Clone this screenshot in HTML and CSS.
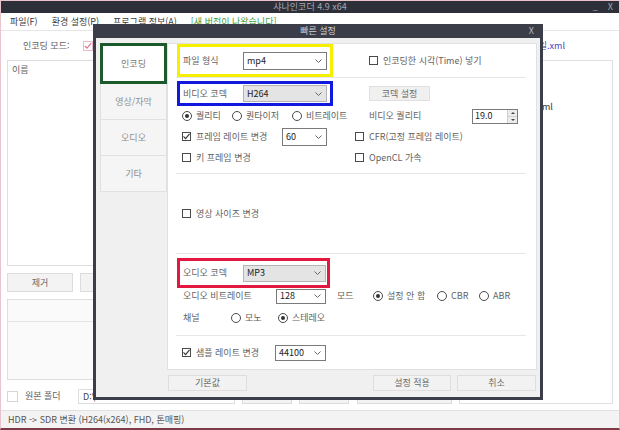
FILE: index.html
```html
<!DOCTYPE html>
<html lang="ko">
<head>
  <meta charset="UTF-8">
  <title>샤나인코더 4.9 x64</title>
  <link rel="stylesheet" href="styles.css">
</head>
<body>
  <div class="window">
    <div class="titlebar">
      <span></span>
      <span class="app-title">샤나인코더 4.9 x64</span>
      <span class="win-btns"><span>_</span><span>X</span></span>
    </div>
    <div class="menubar">
      <span>파일(F)</span>
      <span>환경 설정(P)</span>
      <span>프로그램 정보(A)</span>
      <span class="new-ver">[새 버전이 나왔습니다]</span>
    </div>
    <div class="toolbar">
      <span class="mode-label">인코딩 모드:</span>
      <span class="cb pink"><svg width="8" height="8" viewBox="0 0 8 8"><polyline points="0.8,4 3,6.2 7.2,1.2" fill="none" stroke="#de7795" stroke-width="1.2"/></svg></span>
      <span class="preset-link">기본 설정 파일.xml</span>
    </div>
    <div class="main">
      <div class="left-col">
        <div class="file-list">
          <div class="list-head">이름</div>
        </div>
        <div class="list-btns">
          <button>제거</button>
          <button></button>
        </div>
        <div class="job-panel">
          <div class="job-head"></div>
        </div>
        <div class="folder-row">
          <span class="cb big"></span>
          <span class="folder-label">원본 폴더</span>
          <span class="folder-input">D:\</span>
          <button class="btn-s"></button>
          <button class="btn-s"></button>
          <button class="btn-l"></button>
        </div>
      </div>
      <div class="preset-box">
        <div class="preset-item">사용자 설정.xml</div>
      </div>
    </div>
    <div class="statusbar">HDR -&gt; SDR 변환 (H264(x264), FHD, 톤매핑)</div>

    <div class="dialog">
      <div class="dlg-title">
        <span></span>
        <span>빠른 설정</span>
        <span class="dlg-close">X</span>
      </div>
      <div class="dlg-body">
        <div class="dlg-main">
          <div class="tabs">
            <div class="tab active">인코딩</div>
            <div class="tab">영상/자막</div>
            <div class="tab">오디오</div>
            <div class="tab">기타</div>
          </div>
          <div class="panel">
            <div class="row row-mark r-format">
              <div class="mark mark-yellow">
                <span class="lbl">파일 형식</span>
                <span class="sel w84">mp4<svg width="7" height="4" viewBox="0 0 7 4"><polyline points="0.5,0.5 3.5,3.5 6.5,0.5" fill="none" stroke="#666"/></svg></span>
              </div>
              <span class="opt gap-r"><span class="cb"></span>인코딩한 시각(Time) 넣기</span>
            </div>
            <div class="sep"></div>
            <div class="row row-mark r-codec">
              <div class="mark mark-blue">
                <span class="lbl">비디오 코덱</span>
                <span class="sel gray w84">H264<svg width="7" height="4" viewBox="0 0 7 4"><polyline points="0.5,0.5 3.5,3.5 6.5,0.5" fill="none" stroke="#666"/></svg></span>
              </div>
              <button class="codec-btn gap-r">코덱 설정</button>
            </div>
            <div class="row r-radio">
              <span class="opt w50"><span class="rd on"></span>퀄리티</span>
              <span class="opt w60"><span class="rd"></span>퀀타이저</span>
              <span class="opt w77"><span class="rd"></span>비트레이트</span>
              <span class="lbl w103">비디오 퀄리티</span>
              <span class="spin">19.0<span class="spin-btns"><i class="up"></i><i class="down"></i></span></span>
            </div>
            <div class="row r-line">
              <span class="opt w100"><span class="cb"><svg width="7" height="7" viewBox="0 0 7 7"><polyline points="0.5,3.4 2.6,5.6 6.5,0.8" fill="none" stroke="#333" stroke-width="1.1"/></svg></span>프레임 레이트 변경</span>
              <span class="sel w45">60<svg width="7" height="4" viewBox="0 0 7 4"><polyline points="0.5,0.5 3.5,3.5 6.5,0.5" fill="none" stroke="#666"/></svg></span>
              <span class="opt cfr"><span class="cb"></span>CFR(고정 프레임 레이트)</span>
            </div>
            <div class="row r-line">
              <span class="opt w173"><span class="cb"></span>키 프레임 변경</span>
              <span class="opt"><span class="cb"></span>OpenCL 가속</span>
            </div>
            <div class="sep sep-gap5"></div>
            <div class="row r-size">
              <span class="opt"><span class="cb"></span>영상 사이즈 변경</span>
            </div>
            <div class="sep"></div>
            <div class="row row-mark r-acodec">
              <div class="mark mark-red">
                <span class="lbl">오디오 코덱</span>
                <span class="sel gray w83">MP3<svg width="7" height="4" viewBox="0 0 7 4"><polyline points="0.5,0.5 3.5,3.5 6.5,0.5" fill="none" stroke="#666"/></svg></span>
              </div>
            </div>
            <div class="row r-abit">
              <span class="lbl w94">오디오 비트레이트</span>
              <span class="sel w50 short">128<svg width="7" height="4" viewBox="0 0 7 4"><polyline points="0.5,0.5 3.5,3.5 6.5,0.5" fill="none" stroke="#666"/></svg></span>
              <span class="lbl mode">모드</span>
              <span class="opt w64"><span class="rd on"></span>설정 안 함</span>
              <span class="opt w42"><span class="rd"></span>CBR</span>
              <span class="opt"><span class="rd"></span>ABR</span>
            </div>
            <div class="row r-chan">
              <span class="lbl w49">채널</span>
              <span class="opt w47"><span class="rd"></span>모노</span>
              <span class="opt"><span class="rd on"></span>스테레오</span>
            </div>
            <div class="sep sep-gap7"></div>
            <div class="row r-sample">
              <span class="opt w93"><span class="cb"><svg width="7" height="7" viewBox="0 0 7 7"><polyline points="0.5,3.4 2.6,5.6 6.5,0.8" fill="none" stroke="#333" stroke-width="1.1"/></svg></span>샘플 레이트 변경</span>
              <span class="sel w51">44100<svg width="7" height="4" viewBox="0 0 7 4"><polyline points="0.5,0.5 3.5,3.5 6.5,0.5" fill="none" stroke="#666"/></svg></span>
            </div>
          </div>
        </div>
        <div class="dlg-btns">
          <button>기본값</button>
          <button class="apply">설정 적용</button>
          <button class="cancel">취소</button>
        </div>
      </div>
    </div>
  </div>
</body>
</html>
```

FILE: styles.css
```css
* {
  margin: 0;
  padding: 0;
  box-sizing: border-box;
}
body {
  font-family: "Noto Sans CJK KR", "Noto Sans", sans-serif;
  font-size: 9px;
  line-height: 12px;
  color: #626262;
  background-color: #ffffff;
}
button {
  font: inherit;
  color: #6a6a6a;
  background-color: #f3f3f3;
  border: 1px solid #dcdcdc;
}

/* main window */
.window {
  position: relative;
  width: 620px;
  height: 430px;
  border: 1px solid #ebc3cd;
  border-bottom: 2px solid #7e3a46;
  background-color: #ffffff;
  display: flex;
  flex-direction: column;
}
.titlebar {
  height: 12px;
  flex: none;
  background-color: #2d2f39;
  color: #a3a5af;
  display: grid;
  grid-template-columns: 1fr auto 1fr;
  align-items: center;
}
.win-btns {
  justify-self: end;
  display: flex;
  gap: 10px;
  padding-right: 6px;
}
.menubar {
  height: 18px;
  flex: none;
  border-bottom: 1px solid #e6e6e6;
  display: flex;
  align-items: center;
  gap: 14px;
  padding-left: 9px;
  color: #3a3a3a;
}
.new-ver {
  color: #3d9c3d;
}
.toolbar {
  height: 29px;
  flex: none;
  display: flex;
  align-items: center;
  padding-left: 22px;
  padding-right: 54px;
}
.mode-label {
  width: 60px;
}
.preset-link {
  margin-left: auto;
  color: #4a40c8;
}
.main {
  height: 344px;
  flex: none;
  display: flex;
  gap: 4px;
  padding: 0 6px;
}
.left-col {
  width: 448px;
  display: flex;
  flex-direction: column;
}
.file-list {
  height: 206px;
  border: 1px solid #dedede;
  background-color: #ffffff;
}
.list-head {
  height: 17px;
  line-height: 17px;
  padding-left: 4px;
}
.list-btns {
  height: 19px;
  margin-top: 7px;
  display: flex;
  gap: 7px;
}
.list-btns button {
  width: 66px;
}
.job-panel {
  height: 81px;
  margin-top: 7px;
  border: 1px solid #dedede;
  background-color: #fafafa;
}
.job-head {
  height: 22px;
  border-bottom: 1px solid #e3e3e3;
}
.folder-row {
  height: 16px;
  margin-top: 8px;
  display: flex;
  align-items: center;
}
.folder-label {
  width: 53px;
  margin-left: 7px;
}
.folder-input {
  width: 157px;
  height: 15px;
  border: 1px solid #dedede;
  padding-left: 4px;
  line-height: 13px;
  color: #444444;
}
.folder-row button {
  height: 16px;
}
.btn-s {
  width: 50px;
  margin-left: 7px;
}
.btn-l {
  width: 95px;
  margin-left: 8px;
}
.preset-box {
  flex: 1;
  border: 1px solid #e0e0e0;
  background-color: #ffffff;
}
.preset-item {
  margin-top: 40px;
  padding-left: 31px;
  color: #333333;
}
.statusbar {
  height: 18px;
  flex: none;
  margin-top: 6px;
  border-top: 1px solid #e0e0e0;
  background-color: #f3f3f3;
  padding-left: 7px;
  display: flex;
  align-items: center;
  color: #555555;
}

/* check boxes, radios, combo boxes */
.cb {
  width: 9px;
  height: 9px;
  flex: none;
  border: 1px solid #4a4a4a;
  background-color: #ffffff;
  display: inline-flex;
  align-items: center;
  justify-content: center;
}
.cb.pink {
  width: 10px;
  height: 10px;
  border-color: #e8b9c7;
}
.cb.big {
  width: 11px;
  height: 11px;
  border-color: #d6d6d6;
}
.rd {
  width: 10px;
  height: 10px;
  flex: none;
  border: 1px solid #4a4a4a;
  border-radius: 50%;
  display: inline-flex;
  align-items: center;
  justify-content: center;
}
.rd.on::after {
  content: '';
  width: 4px;
  height: 4px;
  border-radius: 50%;
  background-color: #333333;
}
.opt {
  display: flex;
  align-items: center;
  gap: 4px;
  flex: none;
  white-space: nowrap;
}
.opt .cb {
  margin-right: 1px;
}
.lbl {
  flex: none;
  white-space: nowrap;
}
.sel {
  flex: none;
  height: 18px;
  display: flex;
  align-items: center;
  justify-content: space-between;
  padding: 0 4px 0 3px;
  border: 1px solid #7a7a7a;
  background-color: #ffffff;
  color: #222222;
}
.sel.gray {
  height: 17px;
  background-color: #e4e4e4;
  border-color: #b4b4b4;
}
.sel.short {
  height: 15px;
}

/* quick settings dialog */
.dialog {
  position: absolute;
  left: 92px;
  top: 23px;
  width: 450px;
  height: 376px;
  background-color: #3b3d48;
  padding: 0 3px 3px;
  display: flex;
  flex-direction: column;
}
.dlg-title {
  height: 14px;
  flex: none;
  display: grid;
  grid-template-columns: 1fr auto 1fr;
  align-items: center;
  color: #cfd0d6;
}
.dlg-close {
  justify-self: end;
  padding-right: 6px;
  color: #b9bac2;
}
.dlg-body {
  flex: 1;
  background-color: #f0f0f0;
  padding: 5px 3px 0 4px;
}
.dlg-main {
  display: flex;
}
.tabs {
  width: 67px;
  flex: none;
  display: flex;
  flex-direction: column;
}
.tab {
  height: 36px;
  display: flex;
  align-items: center;
  justify-content: center;
  background-color: #f5f5f5;
  border: 1px solid #e1e1e1;
  border-top: 0;
  color: #8e8e8e;
}
.tab.active {
  height: 41px;
  background-color: #ffffff;
  border: 3px solid #1d5a2b;
  color: #777777;
}
.panel {
  width: 370px;
  height: 327px;
  background-color: #ffffff;
  border: 1px solid #e1e1e1;
  display: flex;
  flex-direction: column;
}
.row {
  display: flex;
  align-items: center;
  flex: none;
  padding-left: 14px;
}
.row-mark {
  padding-left: 9px;
}
.mark {
  display: flex;
  align-items: center;
  flex: none;
  border: 3px solid;
  padding-left: 3px;
}
.mark .lbl {
  width: 60px;
}
.mark-yellow {
  width: 156px;
  height: 33px;
  border-color: #f7ef00;
}
.mark-blue {
  width: 156px;
  height: 25px;
  border-color: #1219df;
}
.mark-red {
  width: 153px;
  height: 30px;
  border-color: #e3173f;
}
.gap-r {
  margin-left: 36px;
}
.sep {
  height: 1px;
  flex: none;
  margin: 0 10px 0 8px;
  background-color: #e6e6e6;
}
.sep-gap5 {
  margin-top: 5px;
}
.sep-gap7 {
  margin-top: 7px;
}
.r-format {
  height: 33px;
}
.r-codec {
  height: 28px;
  padding-top: 3px;
}
.codec-btn {
  width: 61px;
  height: 15px;
  background-color: #f0f0f0;
  border-color: #e0e0e0;
}
.r-radio {
  height: 20px;
}
.r-line {
  height: 21px;
}
.r-size {
  height: 79px;
}
.r-acodec {
  height: 34px;
  padding-top: 4px;
}
.r-abit {
  height: 16px;
  padding-left: 15px;
}
.r-chan {
  height: 20px;
  margin-top: 4px;
  padding-left: 15px;
}
.r-sample {
  height: 33px;
}
.w42 { width: 42px; }
.w45 { width: 45px; }
.w47 { width: 47px; }
.w49 { width: 48px; }
.w50 { width: 50px; }
.w51 { width: 51px; }
.w60 { width: 60px; }
.w64 { width: 64px; }
.w77 { width: 77px; }
.w83 { width: 83px; }
.w84 { width: 84px; }
.w93 { width: 93px; }
.w94 { width: 93px; }
.w100 { width: 100px; }
.w103 { width: 103px; }
.w173 { width: 173px; }
.r-line .sel {
  height: 18px;
}
.cfr {
  margin-left: 28px;
}
.mode {
  width: 36px;
  margin-left: 11px;
}
.r-sample .sel {
  height: 16px;
}
.spin {
  width: 46px;
  height: 15px;
  flex: none;
  border: 1px solid #7a7a7a;
  display: flex;
  align-items: center;
  justify-content: space-between;
  padding-left: 2px;
  color: #222222;
}
.spin-btns {
  width: 10px;
  height: 13px;
  display: flex;
  flex-direction: column;
  border-left: 1px solid #cfcfcf;
}
.spin-btns i {
  flex: 1;
  background-color: #ececec;
  display: flex;
  align-items: center;
  justify-content: center;
}
.spin-btns i.up {
  border-bottom: 1px solid #cfcfcf;
}
.spin-btns i::after {
  content: '';
  border-left: 2px solid transparent;
  border-right: 2px solid transparent;
}
.spin-btns i.up::after {
  border-bottom: 2px solid #444444;
}
.spin-btns i.down::after {
  border-top: 2px solid #444444;
}
.dlg-btns {
  height: 16px;
  margin: 5px 1px 0 68px;
  display: flex;
}
.dlg-btns button {
  width: 79px;
  background-color: #f2f2f2;
  border-color: #dedede;
}
.dlg-btns .apply {
  width: 78px;
  margin-left: auto;
}
.dlg-btns .cancel {
  margin-left: 6px;
}
```
